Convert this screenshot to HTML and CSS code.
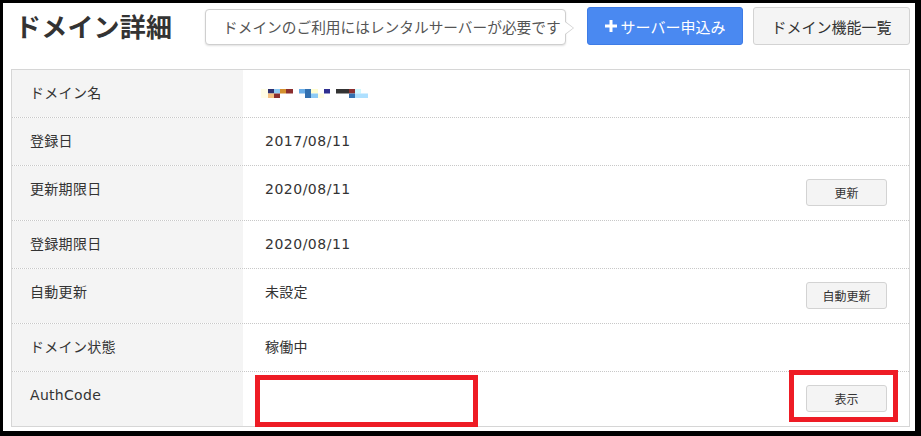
FILE: index.html
```html
<!DOCTYPE html>
<html lang="ja">
<head>
<meta charset="utf-8">
<title>ドメイン詳細</title>
<link rel="stylesheet" href="styles.css">
</head>
<body>
<div class="frame">
  <header class="head">
    <h1 class="title">ドメイン詳細</h1>
    <div class="tip">ドメインのご利用にはレンタルサーバーが必要です</div>
    <button class="btn-primary"><svg class="plus" viewBox="0 0 12 12" width="12" height="12"><path d="M4.5 0h3v4.5H12v3H7.5V12h-3V7.5H0v-3h4.5z" fill="#fff"/></svg>サーバー申込み</button>
    <button class="btn-gray">ドメイン機能一覧</button>
  </header>
  <div class="table">
    <div class="row">
      <div class="label">ドメイン名</div>
      <div class="value">
        <svg class="mosaic" viewBox="0 0 108 9" width="108" height="9">
          <rect x="0" y="0" width="7" height="9" fill="#fffde6"/>
          <rect x="7" y="0" width="6" height="4.5" fill="#2e3070"/>
          <rect x="13" y="0" width="6" height="4.5" fill="#8ecbf5"/>
          <rect x="19" y="0" width="6" height="4.5" fill="#d4902e"/>
          <rect x="25" y="0" width="7" height="4.5" fill="#8b2e2e"/>
          <rect x="7" y="4.5" width="6" height="4.5" fill="#f5c080"/>
          <rect x="13" y="4.5" width="6" height="4.5" fill="#8b2e2e"/>
          <rect x="38" y="0" width="6" height="4.5" fill="#6aaee8"/>
          <rect x="44" y="0" width="6" height="9" fill="#3370b0"/>
          <rect x="50" y="0" width="7" height="4.5" fill="#fffdd0"/>
          <rect x="50" y="4.5" width="7" height="4.5" fill="#8ecbf5"/>
          <rect x="57" y="4.5" width="6" height="4.5" fill="#fffde0"/>
          <rect x="63" y="0" width="6" height="4.5" fill="#303090"/>
          <rect x="75" y="0" width="13" height="4.5" fill="#333333"/>
          <rect x="88" y="0" width="6" height="4.5" fill="#8b2e2e"/>
          <rect x="94" y="0" width="6" height="4.5" fill="#d0f8ff"/>
          <rect x="88" y="4.5" width="6" height="4.5" fill="#3370b0"/>
          <rect x="94" y="4.5" width="13" height="4.5" fill="#aee0ff"/>
        </svg>
      </div>
    </div>
    <div class="row">
      <div class="label">登録日</div>
      <div class="value"><span class="num">2017/08/11</span></div>
    </div>
    <div class="row">
      <div class="label">更新期限日</div>
      <div class="value"><span class="num">2020/08/11</span><button class="btn-small">更新</button></div>
    </div>
    <div class="row">
      <div class="label">登録期限日</div>
      <div class="value"><span class="num">2020/08/11</span></div>
    </div>
    <div class="row">
      <div class="label">自動更新</div>
      <div class="value"><span>未設定</span><button class="btn-small">自動更新</button></div>
    </div>
    <div class="row">
      <div class="label">ドメイン状態</div>
      <div class="value"><span>稼働中</span></div>
    </div>
    <div class="row last">
      <div class="label">AuthCode</div>
      <div class="value"><span></span><button class="btn-small">表示</button></div>
    </div>
  </div>
  <div class="mark mark-code"></div>
  <div class="mark mark-btn"></div>
</div>
</body>
</html>
```
FILE: styles.css
```css
html, body {
  margin: 0;
  padding: 0;
  background: #000;
}
body {
  width: 921px;
  height: 436px;
  overflow: hidden;
  font-family: "DejaVu Sans", "Noto Sans CJK JP", sans-serif;
  color: #333;
}
.frame {
  position: relative;
  margin: 3px 0 0 3px;
  width: 912px;
  height: 428px;
  background: #fff;
  box-sizing: border-box;
  padding-top: 4px;
}
.head {
  display: flex;
  align-items: center;
  height: 38px;
  padding-left: 12px;
}
.title {
  margin: 0;
  font-family: "Noto Sans CJK JP", sans-serif;
  font-size: 26px;
  font-weight: 700;
  line-height: 38px;
  color: #333;
  width: 190px;
  letter-spacing: 0.2px;
}
.tip {
  position: relative;
  width: 361px;
  height: 36px;
  box-sizing: border-box;
  border: 1px solid #cfcfcf;
  border-radius: 4px;
  box-shadow: 0 1px 2px rgba(0,0,0,0.12);
  font-family: "Noto Sans CJK JP", sans-serif;
  font-size: 14.7px;
  color: #555;
  line-height: 34px;
  padding-left: 17px;
  margin-top: 2px;
  background: #fff;
}
.tip::before,
.tip::after {
  content: "";
  position: absolute;
  top: 11px;
  border-style: solid;
  border-color: transparent;
}
.tip::before {
  right: -9px;
  border-width: 7px 0 7px 9px;
  border-left-color: #cfcfcf;
}
.tip::after {
  right: -8px;
  top: 12px;
  border-width: 6px 0 6px 8px;
  border-left-color: #fff;
}
.btn-primary,
.btn-gray {
  height: 38px;
  box-sizing: border-box;
  border-radius: 3px;
  font-family: "Noto Sans CJK JP", sans-serif;
  font-size: 15px;
  display: flex;
  align-items: center;
  justify-content: center;
  padding: 0;
}
.btn-primary {
  margin-left: 21px;
  width: 156px;
  background: #4a89f1;
  border: 1px solid #3e7ce6;
  color: #fff;
  gap: 4px;
}
.plus {
  display: block;
}
.btn-gray {
  margin-left: 10px;
  width: 157px;
  background: #f4f4f4;
  border: 1px solid #d3d3d3;
  color: #333;
}
.table {
  margin: 24px 0 0 8px;
  width: 899px;
  box-sizing: border-box;
  border: 1px solid #d6d6d6;
}
.row {
  display: grid;
  grid-template-columns: 231px 1fr;
  border-bottom: 1px dotted #c8c8c8;
}
.row.last {
  border-bottom: none;
}
.label {
  background: #f4f4f4;
  padding: 13px 0 14px 18px;
  font-size: 14px;
  line-height: 20px;
  letter-spacing: 0.3px;
}
.value {
  display: flex;
  justify-content: space-between;
  align-items: flex-start;
  padding: 13px 22px 14px 22px;
  font-size: 14px;
  line-height: 20px;
}
.value span {
  display: block;
  letter-spacing: 0.3px;
}
.value .num {
  letter-spacing: 0.5px;
}
.mosaic {
  display: block;
  margin: 6px 0 0 -4px;
}
.btn-small {
  width: 81px;
  height: 27px;
  box-sizing: border-box;
  background: #f4f4f4;
  border: 1px solid #d3d3d3;
  border-radius: 3px;
  font-family: "Noto Sans CJK JP", sans-serif;
  font-size: 12px;
  color: #333;
  padding: 0;
}
.mark {
  position: absolute;
  box-sizing: border-box;
  border: 5px solid #ee1c25;
}
.mark-code {
  left: 252px;
  top: 372px;
  width: 223px;
  height: 52px;
}
.mark-btn {
  left: 786px;
  top: 367px;
  width: 109px;
  height: 52px;
}
```
